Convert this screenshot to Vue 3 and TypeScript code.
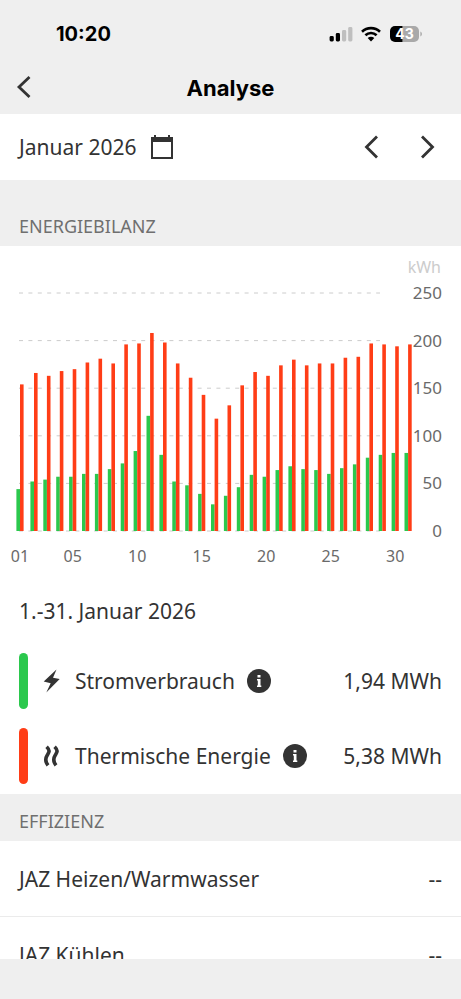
<script setup lang="ts">
import { ref } from 'vue'

interface Summary {
  id: 'power' | 'heat'
  label: string
  value: string
}

interface Metric {
  label: string
  value: string
}

const month = ref('Januar 2026')

const power: number[] = [
  44, 52, 54, 57, 57, 60, 60, 65, 71, 84, 121, 80, 52, 48, 39, 28,
  37, 46, 59, 57, 64, 68, 65, 64, 60, 66, 70, 77, 80, 82, 82,
]
const heat: number[] = [
  154, 166, 163, 168, 170, 177, 181, 176, 196, 197, 208, 198, 176, 161, 143, 118,
  132, 153, 167, 163, 174, 180, 174, 176, 176, 182, 183, 197, 196, 194, 196,
]

const baseline = 285
const unit = 0.952
const gridValues = [250, 200, 150, 100, 50, 0]
const dayLabels = [1, 5, 10, 15, 20, 25, 30]

const yOf = (value: number): number => baseline - value * unit
const xOf = (day: number): number => (day === 1 ? 20 : 34 + (day - 2) * 12.9)
const pad = (day: number): string => String(day).padStart(2, '0')

const bars = heat.map((value, i) => ({
  day: i + 1,
  x: xOf(i + 1),
  heat: value * unit,
  power: power[i] * unit,
}))

const summaries: Summary[] = [
  { id: 'power', label: 'Stromverbrauch', value: '1,94 MWh' },
  { id: 'heat', label: 'Thermische Energie', value: '5,38 MWh' },
]

const metrics: Metric[] = [
  { label: 'JAZ Heizen/Warmwasser', value: '--' },
  { label: 'JAZ Kühlen', value: '--' },
]
</script>

<template>
  <div class="screen">
    <div class="status">
      <span class="clock">10:20</span>
      <div class="indicators">
        <svg width="24" height="18" viewBox="0 0 24 18" aria-hidden="true">
          <rect x="0.600" y="11" width="4.200" height="5.500" rx="1.400" />
          <rect x="6.800" y="8" width="4.200" height="8.500" rx="1.400" />
          <rect class="weak" x="13" y="5" width="4.200" height="11.500" rx="1.400" />
          <rect class="weak" x="19.200" y="2" width="4.200" height="14.500" rx="1.400" />
        </svg>
        <svg width="20" height="16" viewBox="0 0 20 16" aria-hidden="true">
          <g fill="none" stroke="#000" stroke-width="2.600">
            <path d="M1 5.700C6 .900 14 .900 19 5.700" />
            <path d="M4.400 9.300C7.600 6.300 12.400 6.300 15.600 9.300" />
          </g>
          <path d="M10 15.400l-3.300-3.300c1.900-1.700 4.700-1.700 6.600 0z" />
        </svg>
        <svg width="34" height="18" viewBox="0 0 34 18" aria-hidden="true">
          <path d="M13.500 1H25a5 5 0 0 1 5 5v6a5 5 0 0 1-5 5H13.500z" fill="#a9a9a9" />
          <path d="M13.500 1H6a5 5 0 0 0-5 5v6a5 5 0 0 0 5 5h7.500z" />
          <path d="M31.400 6.500c2 .800 2 4.200 0 5z" fill="#a9a9a9" />
          <text class="charge" x="15.500" y="14">43</text>
        </svg>
      </div>
    </div>

    <header class="bar">
      <button class="icon-button" type="button" aria-label="Zurück">
        <svg width="20" height="26" viewBox="0 0 20 26"><path class="chevron" d="M15.500 3L5 13l10.500 10" /></svg>
      </button>
      <h1>Analyse</h1>
    </header>

    <main>
      <div class="period">
        <button class="month" type="button">
          {{ month }}
          <svg width="24" height="26" viewBox="0 0 24 26" aria-hidden="true">
            <path d="M1 3h3V1h2v2h12V1h2v2h3v22H1zM3 8v15h18V8z" fill-rule="evenodd" />
          </svg>
        </button>
        <div class="steps">
          <button class="icon-button" type="button" aria-label="Vorheriger Monat">
            <svg width="20" height="26" viewBox="0 0 20 26"><path class="chevron" d="M16 2.500L5.500 13 16 23.500" /></svg>
          </button>
          <button class="icon-button" type="button" aria-label="Nächster Monat">
            <svg width="20" height="26" viewBox="0 0 20 26"><path class="chevron" d="M4 2.500L14.500 13 4 23.500" /></svg>
          </button>
        </div>
      </div>

      <h2 class="spaced">ENERGIEBILANZ</h2>
      <section class="panel">
        <svg class="chart" viewBox="0 0 461 330" role="img" aria-label="Energiebilanz">
          <text class="unit" x="441" y="27" text-anchor="end">kWh</text>
          <g v-for="value in gridValues" :key="value">
            <line class="grid" x1="19" x2="380" :y1="yOf(value)" :y2="yOf(value)" />
            <text class="tick" x="442" :y="yOf(value) + 6" text-anchor="end">{{ value }}</text>
          </g>
          <g v-for="bar in bars" :key="bar.day">
            <rect class="power" :x="bar.x - 3.6" :y="baseline - bar.power" width="3.6" :height="bar.power" />
            <rect class="heat" :x="bar.x" :y="baseline - bar.heat" width="3.6" :height="bar.heat" />
          </g>
          <text v-for="day in dayLabels" :key="day" class="day" :x="xOf(day)" y="316" text-anchor="middle">{{ pad(day) }}</text>
        </svg>

        <h3>1.-31. Januar 2026</h3>
        <ul class="summaries">
          <li v-for="item in summaries" :key="item.id">
            <span class="marker" :class="item.id"></span>
            <svg class="glyph" width="18" height="26" viewBox="0 0 18 26" aria-hidden="true">
              <path v-if="item.id === 'power'" d="M13.500 1.500L.700 13.500l7 1.800L3.300 24.500 16.700 11l-6.700-1.300z" />
              <g v-else fill="none" stroke="#333" stroke-width="3.600">
                <path d="M3.600 3.700C7.600 7.500 6 9.500 4.200 12.300S2 18.500 5 22.300" />
                <path d="M11.600 3.700c4 3.800 2.400 5.800.600 8.600s-2.200 6.200.800 10" />
              </g>
            </svg>
            <span>{{ item.label }}</span>
            <button class="info" type="button" :aria-label="`Info ${item.label}`">
              <svg width="24" height="24" viewBox="0 0 24 24">
                <circle cx="12" cy="12" r="12" />
                <path d="M10.500 6h3v2.600h-3zM10 10h3.500v6.500h.800V18H10v-1.500h.800v-5H10z" fill="#fff" />
              </svg>
            </button>
            <span class="value">{{ item.value }}</span>
          </li>
        </ul>
      </section>

      <h2>EFFIZIENZ</h2>
      <ul class="metrics">
        <li v-for="metric in metrics" :key="metric.label">
          <span>{{ metric.label }}</span>
          <span>{{ metric.value }}</span>
        </li>
      </ul>
    </main>
  </div>
</template>

<style>
body {
  margin: 0;
  background: #efefef;
}
</style>

<style scoped>
.screen {
  display: flex;
  flex-direction: column;
  box-sizing: border-box;
  height: 100vh;
  padding-bottom: 40px;
  background: #efefef;
  color: #333;
  font-family: "Noto Sans", sans-serif;
  font-size: 21px;
  line-height: 28px;
}

svg {
  display: block;
  flex-shrink: 0;
}

button {
  padding: 0;
  border: 0;
  background: none;
  color: inherit;
  font: inherit;
  cursor: pointer;
}

button svg,
.glyph {
  fill: #333;
}

h1,
h2,
h3,
ul {
  margin: 0;
  padding: 0;
  font-weight: 400;
  list-style: none;
}

.status {
  display: flex;
  flex-shrink: 0;
  align-items: center;
  justify-content: space-between;
  height: 60px;
  padding: 8px 38px 0 56px;
  box-sizing: border-box;
}

.clock {
  color: #000;
  font: 700 20px/24px Inter, sans-serif;
}

.indicators {
  display: flex;
  align-items: center;
  gap: 8px;
}

.weak {
  fill: #bfbfbf;
}

.charge {
  fill: #fff;
  font: 700 14px Inter, sans-serif;
  text-anchor: middle;
}

.bar {
  display: grid;
  grid-template-columns: 20px 1fr 20px;
  flex-shrink: 0;
  align-items: center;
  height: 54px;
  padding: 0 14px;
}

.bar h1 {
  padding-top: 2px;
  color: #000;
  font: 700 22px/28px Inter, sans-serif;
  text-align: center;
}

.chevron {
  fill: none;
  stroke: #333;
  stroke-width: 2.8;
}

main {
  flex: 1;
  min-height: 0;
  overflow: hidden;
}

.period {
  display: flex;
  align-items: center;
  justify-content: space-between;
  height: 66px;
  padding: 0 23px 0 19px;
  background: #fff;
}

.month {
  display: flex;
  align-items: center;
  gap: 14px;
}

.steps {
  display: flex;
  gap: 37px;
}

h2 {
  padding: 15px 19px 8px;
  color: #6f6f6f;
  font-size: 18px;
  line-height: 24px;
}

.spaced {
  padding-top: 34px;
}

.panel {
  background: #fff;
}

.chart {
  width: 100%;
}

.grid {
  stroke: #ccc;
  stroke-width: 1;
  stroke-dasharray: 4 5.4;
}

.tick,
.unit,
.day {
  fill: #6a6a6a;
  font-size: 17px;
}

.day,
.unit {
  font-size: 16px;
}

.unit {
  fill: #ccc;
}

rect.power {
  fill: #2bc84d;
}

rect.heat {
  fill: #ff3d16;
}

h3 {
  padding: 21px 19px 28px;
  font-size: 21px;
  line-height: 28px;
}

.summaries {
  display: flex;
  flex-direction: column;
  gap: 19px;
  padding: 0 19px 10px;
}

.summaries li {
  display: flex;
  align-items: center;
  height: 56px;
}

.marker {
  width: 9px;
  height: 56px;
  margin-right: 15px;
  border-radius: 5px;
}

.marker.power {
  background: #2bc84d;
}

.marker.heat {
  background: #ff3d16;
}

.glyph {
  margin-right: 14px;
}

.info {
  margin-left: 12px;
}

.value {
  margin-left: auto;
}

.metrics li {
  display: flex;
  align-items: center;
  justify-content: space-between;
  height: 75px;
  padding: 0 19px;
  border-bottom: 1px solid #ebebeb;
  background: #fff;
}
</style>
